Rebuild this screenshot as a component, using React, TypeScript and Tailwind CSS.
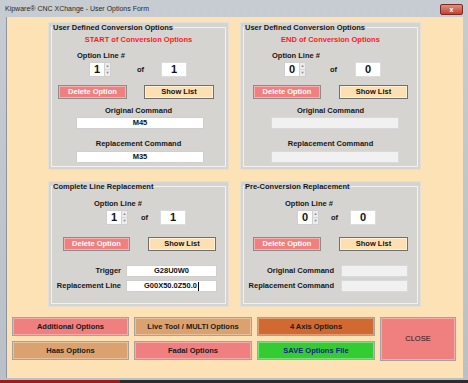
import React from "react";

const lbl = "text-[7.5px] font-bold leading-[10px] text-[#151515]";

function Spinner({ value }: { value: string }) {
  return (
    <div className="flex h-[15px]">
      <div className="flex h-[15px] w-[16px] items-center justify-center border border-[#cfcfcf] bg-white text-[11px] font-bold text-[#111]">
        {value}
      </div>
      <div className="flex h-[15px] w-[6px] flex-col border border-l-0 border-[#cfcfcf] bg-[#ececec]">
        <div className="flex flex-1 items-center justify-center text-[4px] leading-none text-[#8a8a8a]">▲</div>
        <div className="flex flex-1 items-center justify-center border-t border-[#d8d8d8] text-[4px] leading-none text-[#8a8a8a]">▼</div>
      </div>
    </div>
  );
}

function NumBox({ value }: { value: string }) {
  return (
    <div className="flex h-[15px] w-[26px] items-center justify-center border border-[#dcdcdc] bg-white text-[11px] font-bold text-[#111]">
      {value}
    </div>
  );
}

function DeleteBtn({ w }: { w: string }) {
  return (
    <div className={`${w} flex h-[14px] items-center justify-center border border-[#8d8d8d] bg-[#f07f7f] text-[7.5px] font-bold text-white shadow-[inset_0_0_0_1px_#f7b0b0]`}>
      Delete Option
    </div>
  );
}

function ShowBtn({ w }: { w: string }) {
  return (
    <div className={`${w} flex h-[14px] items-center justify-center border border-[#6f6f6f] bg-[#fde0b2] text-[7.5px] font-bold text-[#111] shadow-[inset_0_0_0_1px_#fff1d8]`}>
      Show List
    </div>
  );
}

function Input({ value, disabled, cursor, w }: { value?: string; disabled?: boolean; cursor?: boolean; w: string }) {
  return (
    <div
      className={`${w} flex h-[12px] items-center justify-center border ${
        disabled ? "border-[#d9d9d9] bg-[#f1f1f1]" : "border-[#cfcfcf] bg-white"
      } text-[7.5px] font-bold text-[#111]`}
    >
      {value}
      {cursor && <span className="ml-[1px] h-[9px] w-px bg-black" />}
    </div>
  );
}

function Panel({ title, h, children }: { title: string; h: string; children: React.ReactNode }) {
  return (
    <div className={`relative ${h} w-[181px] border border-[#e2dfd9] bg-[#d5d4d1]`}>
      <div className="absolute bottom-[2px] left-[2px] right-[2px] top-[4px] border border-[#f3f1ed]" />
      <div className={`absolute left-[4px] top-0 bg-[#d5d4d1] pr-[1px] ${lbl}`}>{title}</div>
      <div className="relative flex flex-col">{children}</div>
    </div>
  );
}

function BottomBtn({ label, cls, text = "text-[#1a1a1a]" }: { label: string; cls: string; text?: string }) {
  return (
    <div className={`flex h-[19px] items-center justify-center border border-[#a3a3a3] ${cls} text-[7.5px] font-bold ${text} shadow-[inset_0_0_0_1px_rgba(255,255,255,0.35)]`}>
      {label}
    </div>
  );
}

export default function App() {
  return (
    <div className="relative h-[383px] w-[468px] overflow-hidden bg-[#2d2b2b] font-['Liberation_Sans',Arial,sans-serif]">
      <div className="flex h-[380px] w-[468px] flex-col bg-gradient-to-b from-[#c7ccd2] to-[#b9c0c8]">
        {/* title bar */}
        <div className="relative flex h-[17px] items-center pl-[5px]">
          <span className="text-[7px] leading-none text-[#2a2a2a]">Kipware® CNC XChange - User Options Form</span>
          <div className="absolute right-[5px] top-[4px] flex h-[11px] w-[23px] items-center justify-center rounded-[2px] border border-[#7a2a22] bg-gradient-to-b from-[#e0907f] to-[#c2402c] text-[7px] font-bold leading-none text-white">
            x
          </div>
        </div>

        {/* client */}
        <div className="ml-[6px] mr-[5px] h-[361px] border-l border-[#8d949c] bg-[#fde2b5] pl-[41px] pt-[5px]">
          <div className="grid grid-cols-[181px_181px] gap-x-[11px] gap-y-[11px]">
            {/* panel 1 */}
            <Panel title="User Defined Conversion Options" h="h-[148px]">
              <div className="mt-[12px] text-center text-[7.5px] font-bold leading-[10px] text-[#ff1a1a]">START of Conversion Options</div>
              <div className={`mt-[6px] w-[104px] text-center ${lbl}`}>Option Line #</div>
              <div className="mt-[1px] flex h-[15px] items-center pl-[40px]">
                <Spinner value="1" />
                <span className={`ml-[26px] ${lbl}`}>of</span>
                <div className="ml-[17px]">
                  <NumBox value="1" />
                </div>
              </div>
              <div className="mt-[8px] flex pl-[9px]">
                <DeleteBtn w="w-[69px]" />
                <div className="ml-[17px]">
                  <ShowBtn w="w-[70px]" />
                </div>
              </div>
              <div className={`mt-[7px] text-center ${lbl}`}>Original Command</div>
              <div className="mt-[1px] pl-[27px]">
                <Input value="M45" w="w-[128px]" />
              </div>
              <div className={`mt-[10px] text-center ${lbl}`}>Replacement Command</div>
              <div className="mt-[2px] pl-[27px]">
                <Input value="M35" w="w-[128px]" />
              </div>
            </Panel>

            {/* panel 2 */}
            <Panel title="User Defined Conversion Options" h="h-[148px]">
              <div className="mt-[12px] text-center text-[7.5px] font-bold leading-[10px] text-[#ff1a1a]">END of Conversion Options</div>
              <div className={`mt-[6px] w-[110px] text-center ${lbl}`}>Option Line #</div>
              <div className="mt-[1px] flex h-[15px] items-center pl-[43px]">
                <Spinner value="0" />
                <span className={`ml-[24px] ${lbl}`}>of</span>
                <div className="ml-[18px]">
                  <NumBox value="0" />
                </div>
              </div>
              <div className="mt-[8px] flex pl-[12px]">
                <DeleteBtn w="w-[68px]" />
                <div className="ml-[18px]">
                  <ShowBtn w="w-[69px]" />
                </div>
              </div>
              <div className={`mt-[7px] text-center ${lbl}`}>Original Command</div>
              <div className="mt-[1px] pl-[30px]">
                <Input disabled w="w-[128px]" />
              </div>
              <div className={`mt-[10px] text-center ${lbl}`}>Replacement Command</div>
              <div className="mt-[2px] pl-[30px]">
                <Input disabled w="w-[128px]" />
              </div>
            </Panel>

            {/* panel 3 */}
            <Panel title="Complete Line Replacement" h="h-[126px]">
              <div className={`mt-[17px] w-[138px] text-center ${lbl}`}>Option Line #</div>
              <div className="mt-[1px] flex h-[15px] items-center pl-[57px]">
                <Spinner value="1" />
                <span className={`ml-[13px] ${lbl}`}>of</span>
                <div className="ml-[12px]">
                  <NumBox value="1" />
                </div>
              </div>
              <div className="mt-[12px] flex pl-[14px]">
                <DeleteBtn w="w-[67px]" />
                <div className="ml-[18px]">
                  <ShowBtn w="w-[68px]" />
                </div>
              </div>
              <div className="mt-[14px] flex items-center">
                <div className={`w-[72px] text-right ${lbl}`}>Trigger</div>
                <div className="ml-[5px]">
                  <Input value="G28U0W0" w="w-[91px]" />
                </div>
              </div>
              <div className="mt-[3px] flex items-center">
                <div className={`w-[72px] text-right ${lbl}`}>Replacement Line</div>
                <div className="ml-[5px]">
                  <Input value="G00X50.0Z50.0" cursor w="w-[91px]" />
                </div>
              </div>
            </Panel>

            {/* panel 4 */}
            <Panel title="Pre-Conversion Replacement" h="h-[126px]">
              <div className={`mt-[17px] w-[136px] text-center ${lbl}`}>Option Line #</div>
              <div className="mt-[1px] flex h-[15px] items-center pl-[56px]">
                <Spinner value="0" />
                <span className={`ml-[12px] ${lbl}`}>of</span>
                <div className="ml-[12px]">
                  <NumBox value="0" />
                </div>
              </div>
              <div className="mt-[12px] flex pl-[12px]">
                <DeleteBtn w="w-[68px]" />
                <div className="ml-[18px]">
                  <ShowBtn w="w-[69px]" />
                </div>
              </div>
              <div className="mt-[14px] flex items-center">
                <div className={`w-[93px] text-right ${lbl}`}>Original Command</div>
                <div className="ml-[7px]">
                  <Input disabled w="w-[67px]" />
                </div>
              </div>
              <div className="mt-[3px] flex items-center">
                <div className={`w-[93px] whitespace-nowrap text-right ${lbl}`}>Replacement Command</div>
                <div className="ml-[7px]">
                  <Input disabled w="w-[67px]" />
                </div>
              </div>
            </Panel>
          </div>

          {/* bottom buttons */}
          <div className="-ml-[36px] mt-[10px] grid grid-cols-[117px_118px_118px_76px] grid-rows-[19px_19px] gap-x-[5px] gap-y-[5px]">
            <BottomBtn label="Additional Options" cls="bg-[#f07f7f]" />
            <BottomBtn label="Live Tool / MULTI Options" cls="bg-[#dba26f]" />
            <BottomBtn label="4 Axis Options" cls="bg-[#d06a31]" />
            <div className="row-span-2 flex h-[44px] items-center justify-center border border-[#a3a3a3] bg-[#f07f7f] text-[7.5px] text-[#1a1a1a] shadow-[inset_0_0_0_1px_rgba(255,255,255,0.35)]">
              CLOSE
            </div>
            <BottomBtn label="Haas Options" cls="bg-[#dba26f]" />
            <BottomBtn label="Fadal Options" cls="bg-[#f07f7f]" />
            <BottomBtn label="SAVE Options File" cls="bg-[#33cc33]" text="text-[#1b1b8a]" />
          </div>
        </div>
      </div>
      <div className="absolute bottom-0 left-0 h-[3px] w-[120px] bg-[#9b1c1c]" />
    </div>
  );
}
